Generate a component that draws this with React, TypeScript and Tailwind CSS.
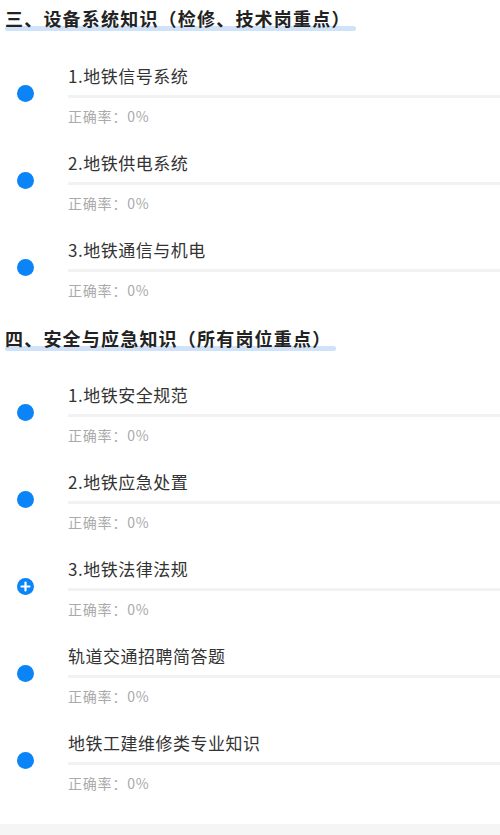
import React from "react";

interface Chapter {
  name: string;
  rate: string;
  expandable?: boolean;
}

interface Section {
  title: string;
  chapters: Chapter[];
}

const sections: Section[] = [
  {
    title: "三、设备系统知识（检修、技术岗重点）",
    chapters: [
      { name: "1.地铁信号系统", rate: "0%" },
      { name: "2.地铁供电系统", rate: "0%" },
      { name: "3.地铁通信与机电", rate: "0%" },
    ],
  },
  {
    title: "四、安全与应急知识（所有岗位重点）",
    chapters: [
      { name: "1.地铁安全规范", rate: "0%" },
      { name: "2.地铁应急处置", rate: "0%" },
      { name: "3.地铁法律法规", rate: "0%", expandable: true },
      { name: "轨道交通招聘简答题", rate: "0%" },
      { name: "地铁工建维修类专业知识", rate: "0%" },
    ],
  },
];

function Marker({ expandable }: { expandable?: boolean }) {
  if (expandable) {
    return (
      <svg width="17" height="17" viewBox="0 0 17 17" className="block">
        <circle cx="8.5" cy="8.5" r="8.5" fill="#0b84f7" />
        <path d="M8.5 4.5v8M4.5 8.5h8" stroke="#ffffff" strokeWidth="2.2" strokeLinecap="round" />
      </svg>
    );
  }
  return <div className="w-[17px] h-[17px] rounded-full bg-[#0b84f7]" />;
}

function ChapterRow({ chapter }: { chapter: Chapter }) {
  return (
    <div className="flex items-start h-[87px]">
      <div className="w-[68px] shrink-0 pl-[17px] pt-[29px]">
        <Marker expandable={chapter.expandable} />
      </div>
      <div className="flex-1 pt-2">
        <div className="text-[17px] leading-6 tracking-[0.5px] text-[#333333]">{chapter.name}</div>
        <div className="mt-[7px] h-[3px] bg-[#f2f2f2]" />
        <div className="mt-2 text-[14px] leading-5 tracking-[0.8px] text-[#aaaaaa]">正确率：{chapter.rate}</div>
      </div>
    </div>
  );
}

export default function App() {
  return (
    <div
      className="w-[500px] h-[835px] bg-white overflow-hidden flex flex-col"
      style={{ fontFamily: "'Noto Sans CJK SC', 'Noto Sans', sans-serif" }}
    >
      {sections.map((section, i) => (
        <div key={section.title} className={i === 0 ? "pt-[6px]" : "pt-[9px]"}>
          <div className={i === 0 ? "pl-[5px] h-[50px]" : "pl-[5px] h-[49px]"}>
            <span className="relative inline-block">
              <span className="absolute left-0 -right-[5px] bottom-0 h-[5px] rounded-full bg-[#cfe2f8]" />
              <span className="relative text-[18px] leading-6 font-bold tracking-[1.2px] text-[#222222]">
                {section.title}
              </span>
            </span>
          </div>
          {section.chapters.map((c) => (
            <ChapterRow key={c.name} chapter={c} />
          ))}
        </div>
      ))}
      <div className="mt-auto h-[11px] bg-[#f5f5f5]" />
    </div>
  );
}
